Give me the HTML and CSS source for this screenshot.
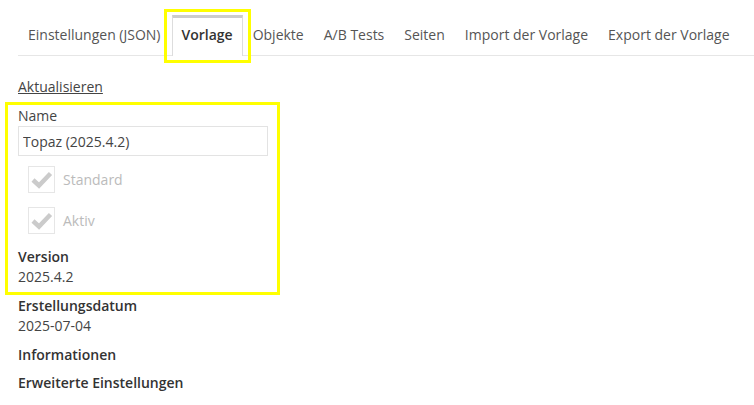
FILE: index.html
```html
<!DOCTYPE html>
<html lang="de">
<head>
<meta charset="utf-8">
<title>Vorlage</title>
<link rel="stylesheet" href="styles.css">
</head>
<body>
<nav class="tabs">
  <a class="tab">Einstellungen (JSON)</a>
  <a class="tab tab-active">Vorlage</a>
  <a class="tab">Objekte</a>
  <a class="tab">A/B Tests</a>
  <a class="tab">Seiten</a>
  <a class="tab">Import der Vorlage</a>
  <a class="tab">Export der Vorlage</a>
</nav>
<main class="content">
  <a class="action">Aktualisieren</a>
  <div class="group">
    <div class="field">
      <label class="label">Name</label>
      <input class="input" type="text" value="Topaz (2025.4.2)">
    </div>
    <div class="check check-first">
      <span class="box"><svg width="27" height="27" viewBox="0 0 27 27"><path d="M5 14 L11 19.5 L22.5 7.5" fill="none" stroke="#cbcbcb" stroke-width="4.5"/></svg></span>
      <span class="check-label">Standard</span>
    </div>
    <div class="check check-second">
      <span class="box"><svg width="27" height="27" viewBox="0 0 27 27"><path d="M5 14 L11 19.5 L22.5 7.5" fill="none" stroke="#cbcbcb" stroke-width="4.5"/></svg></span>
      <span class="check-label">Aktiv</span>
    </div>
    <div class="field field-version">
      <div class="strong">Version</div>
      <div class="value">2025.4.2</div>
    </div>
  </div>
  <div class="field field-date">
    <div class="strong">Erstellungsdatum</div>
    <div class="value">2025-07-04</div>
  </div>
  <div class="section strong">Informationen</div>
  <div class="section section-last strong">Erweiterte Einstellungen</div>
</main>
</body>
</html>
```
FILE: styles.css
```css
html, body {
  margin: 0;
  padding: 0;
  background: #ffffff;
}
body {
  font-family: "Open Sans", "Noto Sans", "Liberation Sans", sans-serif;
  font-size: 14px;
  line-height: 20px;
  color: #444444;
  padding-left: 18px;
}
.tabs {
  display: flex;
  margin-top: 15px;
  border-bottom: 1px solid #e6e6e6;
}
.tab {
  display: block;
  padding: 7px 9px 10px;
  border: 1px solid transparent;
  border-top: 3px solid transparent;
  border-bottom: 0;
  margin-bottom: -1px;
  color: #555555;
  white-space: nowrap;
}
.tab-active {
  position: relative;
  margin-left: 2px;
  padding-left: 8px;
  padding-bottom: 11px;
  background: #ffffff;
  border-color: #dddddd;
  border-top-color: #cccccc;
  font-weight: 600;
  color: #333333;
}
.tab-active::after {
  content: "";
  position: absolute;
  top: -9px;
  left: -9px;
  right: -9px;
  bottom: -7px;
  border: 3px solid #ffff00;
}
.content {
  display: flex;
  flex-direction: column;
  align-items: flex-start;
  padding-top: 21px;
}
.action {
  color: #444444;
  text-decoration: underline;
}
.group {
  position: relative;
  width: 250px;
  margin-top: 9px;
  display: flex;
  flex-direction: column;
}
.group::after {
  content: "";
  position: absolute;
  top: -4px;
  left: -13px;
  right: -12px;
  bottom: -8px;
  border: 3px solid #ffff00;
}
.field {
  display: flex;
  flex-direction: column;
}
.label {
  color: #444444;
}
.input {
  box-sizing: border-box;
  width: 250px;
  height: 30px;
  margin: 0;
  padding: 0 4px;
  border: 1px solid #e3e3e3;
  font-family: inherit;
  font-size: 14px;
  color: #444444;
  outline: none;
}
.check {
  display: flex;
  align-items: center;
  gap: 8px;
  margin-left: 10px;
}
.check-first {
  margin-top: 10px;
}
.check-second {
  margin-top: 14px;
}
.box {
  box-sizing: border-box;
  width: 27px;
  height: 27px;
  border: 1px solid #e6e6e6;
  display: flex;
}
.box svg {
  display: block;
  margin: -1px;
}
.check-label {
  color: #bbbbbb;
}
.field-version {
  margin-top: 13px;
}
.strong {
  font-weight: 600;
  color: #333333;
}
.value {
  color: #444444;
}
.field-date {
  margin-top: 9px;
}
.section {
  margin-top: 9px;
}
.section-last {
  margin-top: 8px;
}
```
